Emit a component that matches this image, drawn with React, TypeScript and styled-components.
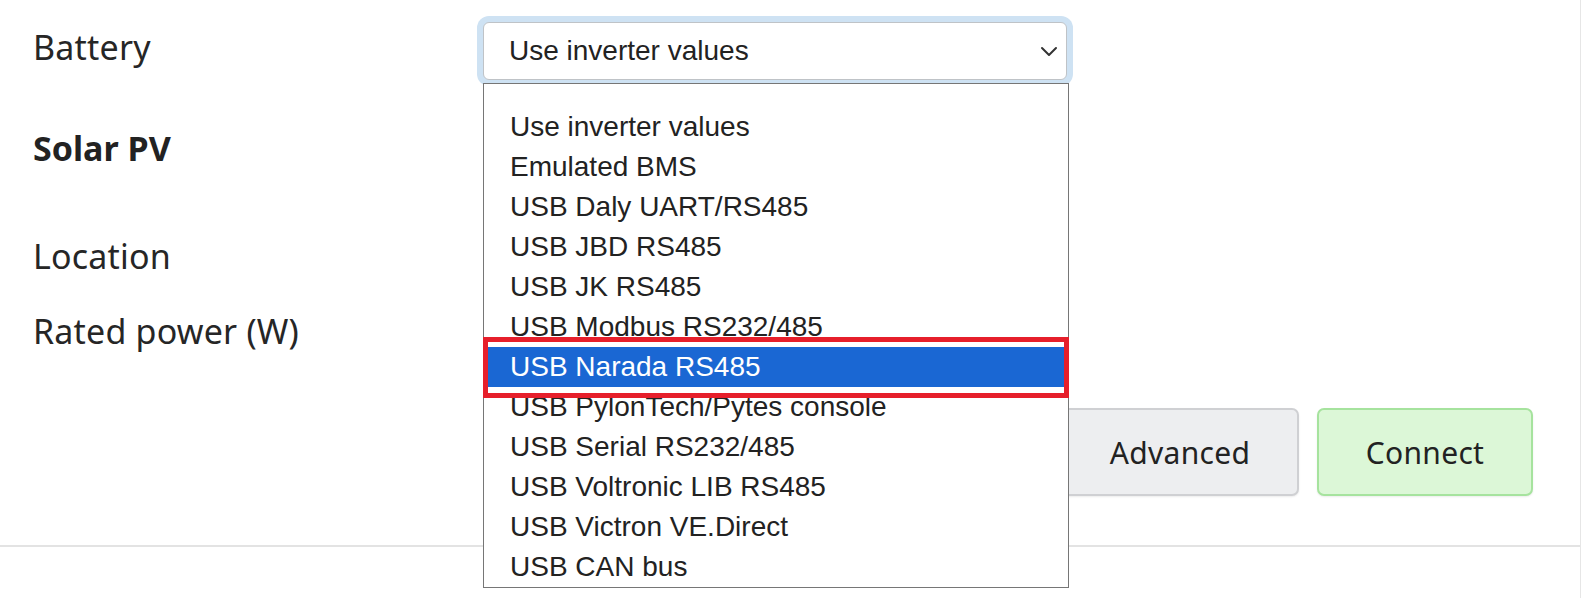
import React from "react";
import styled, { createGlobalStyle } from "styled-components";

const GlobalStyle = createGlobalStyle`
  html, body {
    margin: 0;
    padding: 0;
    background: #ffffff;
  }
  body {
    font-family: "Noto Sans", "DejaVu Sans", sans-serif;
    color: #222222;
  }
`;

const Page = styled.div`
  width: 1580px;
  height: 598px;
  border-right: 1px solid #e6e6e6;
  overflow: hidden;
`;

const Form = styled.div`
  padding: 22px 47px 49px 33px;
  border-bottom: 2px solid #e3e3e3;
`;

const Row = styled.div<{ $mt?: number }>`
  display: grid;
  grid-template-columns: 450px 584px;
  align-items: start;
  height: 58px;
  margin-top: ${(p) => p.$mt ?? 0}px;
`;

const Label = styled.span`
  display: block;
  margin-top: 5px;
  font-size: 34px;
  line-height: 40px;
  font-weight: 400;
  letter-spacing: 0.2px;
  color: #262626;
  white-space: nowrap;
`;

const SectionTitle = styled.div<{ $mt?: number }>`
  margin-top: ${(p) => p.$mt ?? 0}px;
  font-size: 34px;
  line-height: 40px;
  font-weight: 700;
  color: #222222;
`;

const SelectWrap = styled.div`
  position: relative;
  height: 58px;
`;

const SelectBox = styled.div`
  box-sizing: border-box;
  height: 58px;
  display: flex;
  align-items: center;
  justify-content: space-between;
  padding: 0 8px 0 25px;
  border: 1.5px solid #bfc3c7;
  border-radius: 6px;
  box-shadow: 0 0 0 6px #cee2f3;
  background: #ffffff;
  font-family: "Liberation Sans", Arial, sans-serif;
  font-size: 28px;
  color: #222222;
`;

const Chevron = styled.svg`
  width: 18px;
  height: 12px;
  flex: none;
`;

const OptionList = styled.div`
  position: absolute;
  top: 61px;
  left: 0;
  width: 584px;
  padding-top: 23px;
  border: 1px solid #767676;
  background: #ffffff;
  z-index: 10;
`;

const Option = styled.div<{ $selected?: boolean }>`
  height: 40px;
  line-height: 40px;
  padding-left: 26px;
  font-family: "Liberation Sans", Arial, sans-serif;
  font-size: 28px;
  color: #222222;
  white-space: nowrap;
  ${(p) =>
    p.$selected &&
    `
    position: relative;
    z-index: 1;
    margin: 0 4px;
    padding-left: 22px;
    background: #1a67d3;
    color: #ffffff;
    box-shadow: 0 -5px 0 #ffffff, 0 6px 0 #ffffff;
    &::after {
      content: "";
      position: absolute;
      left: -5px;
      right: -5px;
      top: -10px;
      bottom: -11px;
      border: 5px solid #e61f2b;
      pointer-events: none;
    }
  `}
`;

const Actions = styled.div<{ $mt?: number }>`
  display: flex;
  justify-content: flex-end;
  gap: 18px;
  margin-top: ${(p) => p.$mt ?? 0}px;
`;

const Button = styled.button<{ $variant: "plain" | "go"; $w: number }>`
  box-sizing: border-box;
  width: ${(p) => p.$w}px;
  height: 88px;
  border-radius: 7px;
  border: 2px solid ${(p) => (p.$variant === "go" ? "#a6e39e" : "#cfd0d3")};
  background: ${(p) => (p.$variant === "go" ? "#dcf7d7" : "#edeef0")};
  box-shadow: 0 1px 2px rgba(0, 0, 0, 0.08);
  font-family: "Noto Sans", "DejaVu Sans", sans-serif;
  font-size: 30px;
  letter-spacing: 0.3px;
  color: #222222;
  cursor: pointer;
`;

const options = [
  "Use inverter values",
  "Emulated BMS",
  "USB Daly UART/RS485",
  "USB JBD RS485",
  "USB JK RS485",
  "USB Modbus RS232/485",
  "USB Narada RS485",
  "USB PylonTech/Pytes console",
  "USB Serial RS232/485",
  "USB Voltronic LIB RS485",
  "USB Victron VE.Direct",
  "USB CAN bus",
];

export default function App() {
  return (
    <>
      <GlobalStyle />
      <Page>
        <Form>
          <Row>
            <Label>Battery</Label>
            <SelectWrap>
              <SelectBox>
                <span>Use inverter values</span>
                <Chevron viewBox="0 0 18 12">
                  <path
                    d="M2 3 L9 10 L16 3"
                    fill="none"
                    stroke="#333"
                    strokeWidth="2"
                    strokeLinecap="round"
                    strokeLinejoin="round"
                  />
                </Chevron>
              </SelectBox>
              <OptionList>
                {options.map((o) => (
                  <Option key={o} $selected={o === "USB Narada RS485"}>
                    {o}
                  </Option>
                ))}
              </OptionList>
            </SelectWrap>
          </Row>
          <SectionTitle $mt={48}>Solar PV</SectionTitle>
          <Row $mt={63}>
            <Label>Location</Label>
          </Row>
          <Row $mt={17}>
            <Label>Rated power (W)</Label>
          </Row>
          <Actions $mt={44}>
            <Button $variant="plain" $w={238}>
              Advanced
            </Button>
            <Button $variant="go" $w={216}>
              Connect
            </Button>
          </Actions>
        </Form>
      </Page>
    </>
  );
}
